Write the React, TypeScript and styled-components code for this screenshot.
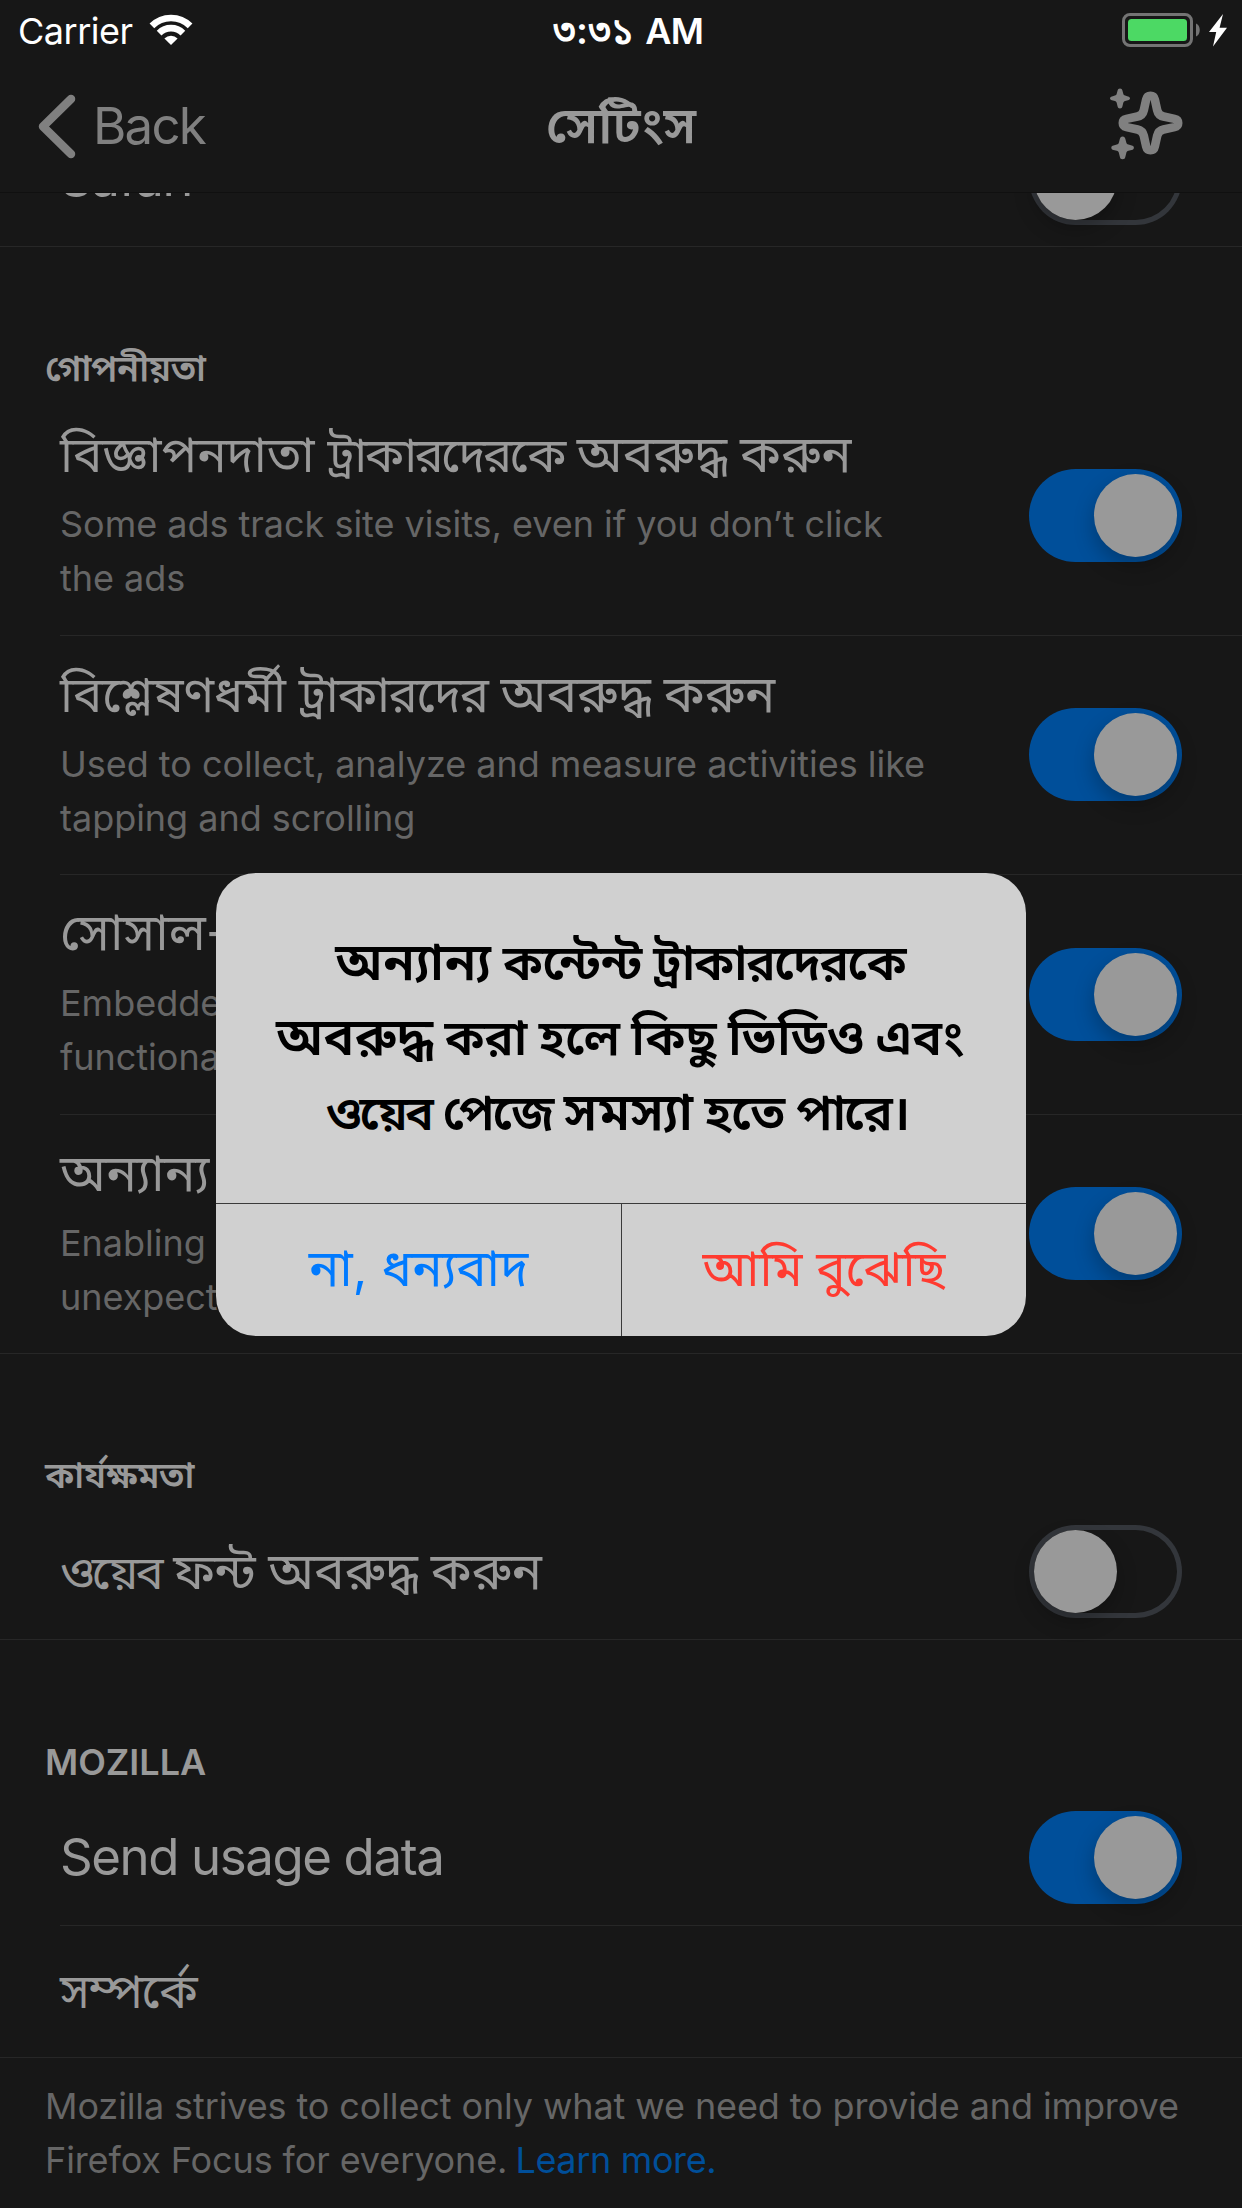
import React from "react";
import styled, { createGlobalStyle } from "styled-components";

const GlobalStyle = createGlobalStyle`
  *, *::before, *::after { box-sizing: border-box; }
  html, body { margin: 0; padding: 0; background: #171717; }
  body {
    font-family: Inter, "Noto Sans Bengali", "Noto Sans", sans-serif;
    color: #999999;
  }
`;

const Screen = styled.div`
  position: relative;
  display: flex;
  flex-direction: column;
  width: 1242px;
  height: 2208px;
  overflow: hidden;
  background: #171717;
`;

const StatusBar = styled.header`
  display: grid;
  grid-template-columns: 1fr auto 1fr;
  flex: none;
  height: 60px;
  line-height: 62px;
  font-size: 36px;
  color: #ffffff;
`;

const StatusLeft = styled.div`
  display: flex;
  gap: 16px;
  padding-left: 18px;
  letter-spacing: -0.5px;
`;

const WifiIcon = styled.svg`
  flex: none;
  width: 44px;
  height: 32px;
  margin-top: 14px;
`;

const Clock = styled.div`
  display: flex;
  gap: 11px;
  margin-left: 14px;
  font-weight: 600;
  letter-spacing: -0.8px;
`;

const Digits = styled.span`
  font-size: 37.5px;
  letter-spacing: 0.4px;
`;

const StatusRight = styled.div`
  display: flex;
  justify-content: flex-end;
  padding: 12px 14px 0 0;
`;

const BatteryIcon = styled.svg`
  width: 106px;
  height: 36px;
`;

const NavBar = styled.nav`
  display: grid;
  grid-template-columns: 1fr auto 1fr;
  flex: none;
  height: 133px;
  padding: 0 36px;
  line-height: 131px;
  font-size: 51px;
  border-bottom: 1px solid #101010;
`;

const BackButton = styled.a`
  display: flex;
  gap: 17px;
  color: #808080;
  letter-spacing: -1.8px;
`;

const Chevron = styled.svg`
  width: 40px;
  height: 66px;
  margin-top: 34px;
`;

const NavTitle = styled.h1`
  margin: 0;
  font-size: 51.3px;
  font-weight: 600;
  line-height: 129px;
`;

const SparkleIcon = styled.svg`
  justify-self: end;
  width: 73px;
  height: 73px;
  margin: 28px 23px 0 0;
`;

const Content = styled.main`
  display: flex;
  flex-direction: column;
  flex: 1;
  min-height: 0;
  overflow: hidden;
`;

const ScrolledList = styled.div`
  flex: none;
  margin-top: -83px;
`;

const SectionHeader = styled.h2<{ $latin?: boolean }>`
  height: 149px;
  margin: 0;
  padding: ${(p) => (p.$latin ? 101 : 100)}px 0 0 45px;
  line-height: 43px;
  font-size: 36px;
  font-weight: 600;
  letter-spacing: ${(p) => (p.$latin ? 0 : -0.35)}px;
`;

const Cell = styled.div<{ $height: number; $last?: boolean; $top?: boolean }>`
  display: flex;
  justify-content: space-between;
  align-items: ${(p) => (p.$top ? "flex-start" : "center")};
  height: ${(p) => p.$height}px;
  margin-left: ${(p) => (p.$last ? 0 : 60)}px;
  padding-left: ${(p) => (p.$last ? 60 : 0)}px;
  padding-right: 60px;
  box-shadow: inset 0 -1px 0 #272727;
`;

const CellText = styled.div`
  display: flex;
  flex-direction: column;
  gap: 9.5px;
  padding-top: 26px;
`;

const CellTitle = styled.div<{ $latin?: boolean }>`
  height: 62px;
  margin-bottom: ${(p) => (p.$latin ? 1 : 3)}px;
  line-height: 62px;
  white-space: nowrap;
  font-size: ${(p) => (p.$latin ? 51 : 49)}px;
  letter-spacing: ${(p) => (p.$latin ? -1.42 : 0)}px;
  word-spacing: ${(p) => (p.$latin ? 0 : -1)}px;
`;

const CellDetail = styled.p`
  margin: 0;
  white-space: pre-line;
  line-height: 54px;
  font-size: 36px;
  letter-spacing: -0.02px;
  color: #666666;
`;

const Track = styled.div<{ $on: boolean; $raised?: boolean }>`
  display: flex;
  flex: none;
  align-self: center;
  align-items: center;
  justify-content: ${(p) => (p.$on ? "flex-end" : "flex-start")};
  width: 153px;
  height: 93px;
  margin-bottom: ${(p) => (p.$raised ? 2 : 0)}px;
  padding: 5px;
  border-radius: 47px;
  background: ${(p) => (p.$on ? "#004f9a" : "transparent")};
  box-shadow: ${(p) => (p.$on ? "none" : "inset 0 0 0 5px #33363b")};
`;

const Thumb = styled.div`
  width: 83px;
  height: 83px;
  border-radius: 50%;
  background: #999999;
  box-shadow: 0 9px 20px rgba(0, 0, 0, 0.25);
`;

const Footer = styled.p`
  margin: 0;
  padding: 21px 45px 0;
  white-space: nowrap;
  line-height: 54px;
  font-size: 36px;
  letter-spacing: -0.11px;
  color: #666666;
`;

const FooterLink = styled.a`
  margin-left: -2px;
  letter-spacing: -0.35px;
  color: #004f9a;
`;

const Overlay = styled.div`
  position: absolute;
  inset: 0;
  display: flex;
  align-items: center;
  justify-content: center;
`;

const Dialog = styled.section`
  display: flex;
  flex-direction: column;
  width: 810px;
  height: 463px;
  overflow: hidden;
  border-radius: 40px;
  background: #d0d0d0;
`;

const DialogMessage = styled.h3`
  display: flex;
  flex-direction: column;
  align-items: center;
  flex: 1;
  margin: 0;
  padding: 51px 2px 0 0;
  line-height: 75px;
  font-size: 49.7px;
  font-weight: 600;
  color: #000000;
`;

const MessageLine = styled.span`
  height: 75px;
  white-space: nowrap;
  word-spacing: -1.3px;

  &:last-child {
    padding-right: 6px;
  }
`;

const Word = styled.span<{ $size: number; $spacing: number }>`
  font-size: ${(p) => p.$size}px;
  letter-spacing: ${(p) => p.$spacing}px;
`;

const DialogActions = styled.div`
  display: grid;
  grid-template-columns: 405px 1fr;
  height: 133px;
  border-top: 1px solid #3a3a3a;
`;

const DialogButton = styled.button<{ $danger?: boolean }>`
  margin: 0;
  padding: 0 0 3px;
  border: 0;
  border-left: ${(p) => (p.$danger ? "1px solid #3a3a3a" : "0")};
  background: transparent;
  line-height: 128px;
  font-family: inherit;
  font-size: ${(p) => (p.$danger ? 49.1 : 50.8)}px;
  color: ${(p) => (p.$danger ? "#ff3b30" : "#007aff")};
`;

type WordSpec = [text: string, size: number, spacing: number];

function Phrase({ words }: { words: WordSpec[] }) {
  return (
    <>
      {words.map(([text, size, spacing], i) => (
        <React.Fragment key={i}>
          {i > 0 && " "}
          <Word $size={size} $spacing={spacing}>
            {text}
          </Word>
        </React.Fragment>
      ))}
    </>
  );
}

function Toggle({ on, raised }: { on: boolean; raised?: boolean }) {
  return (
    <Track $on={on} $raised={raised} role="switch" aria-checked={on}>
      <Thumb />
    </Track>
  );
}

const trackers: { title: WordSpec[]; detail: string }[] = [
  {
    title: [
      ["বিজ্ঞাপনদাতা", 49.2, 0],
      ["ট্রাকারদেরকে", 48.8, -2.6],
      ["অবরুদ্ধ", 51.5, 0],
      ["করুন", 50.6, 0],
    ],
    detail: "Some ads track site visits, even if you don’t click\nthe ads",
  },
  {
    title: [
      ["বিশ্লেষণধর্মী", 49, -0.1],
      ["ট্রাকারদের", 49, -1.4],
      ["অবরুদ্ধ", 51.5, 0],
      ["করুন", 50.6, 0],
    ],
    detail: "Used to collect, analyze and measure activities like\ntapping and scrolling",
  },
  { title: [["সোসাল-", 50.8, 0]], detail: "Embedded\nfunctionality" },
  { title: [["অন্যান্য", 51.5, 0]], detail: "Enabling\nunexpectedly" },
];

const webFonts: WordSpec[] = [
  ["ওয়েব", 47.2, -3],
  ["ফন্ট", 50, -0.4],
  ["অবরুদ্ধ", 51.5, -0.2],
  ["করুন", 50.6, 0],
];

const message: WordSpec[][] = [
  [
    ["অন্যান্য", 52.3, 0.3],
    ["কন্টেন্ট", 49.3, -0.3],
    ["ট্রাকারদেরকে", 49.7, -1.8],
  ],
  [
    ["অবরুদ্ধ", 52, 0],
    ["করা", 49.2, 0],
    ["হলে", 48.6, 0],
    ["কিছু", 49.7, 0],
    ["ভিডিও", 50, 0],
    ["এবং", 49.7, 0],
  ],
  [
    ["ওয়েব", 48, -2.6],
    ["পেজে", 48.6, -2],
    ["সমস্যা", 53, 0],
    ["হতে", 49.7, -0.3],
    ["পারে।", 49.7, -2.2],
  ],
];

export default function App() {
  return (
    <Screen>
      <GlobalStyle />
      <StatusBar>
        <StatusLeft>
          <span>Carrier</span>
          <WifiIcon viewBox="0 0 44 32">
            <g fill="none" stroke="#fff" strokeWidth="6.6">
              <path d="M2.9 11.9a27 27 0 0 1 38.2 0" />
              <path d="M10.1 19.1a16.8 16.8 0 0 1 23.8 0" />
            </g>
            <path d="M22 31l-6.6-6.6a9.4 9.4 0 0 1 13.2 0z" fill="#fff" />
          </WifiIcon>
        </StatusLeft>
        <Clock>
          <Digits>৩:৩১</Digits>
          <span>AM</span>
        </Clock>
        <StatusRight>
          <BatteryIcon viewBox="0 0 106 36">
            <rect x="1.5" y="2.5" width="68" height="31" rx="6.5" fill="none" stroke="#747474" strokeWidth="3" />
            <rect x="6" y="7" width="59" height="22" rx="3.5" fill="#4cd964" />
            <path d="M74 11.5c5 2 5 11 0 13z" fill="#747474" />
            <path d="M101 2L87 20h7.2L91 34.5L105 15.8h-7.4z" fill="#fff" />
          </BatteryIcon>
        </StatusRight>
      </StatusBar>

      <NavBar>
        <BackButton>
          <Chevron viewBox="0 0 40 66">
            <path d="M35 5L7 32.5L35 60" fill="none" stroke="#808080" strokeWidth="8.5" strokeLinecap="round" strokeLinejoin="round" />
          </Chevron>
          Back
        </BackButton>
        <NavTitle>সেটিংস</NavTitle>
        <SparkleIcon viewBox="0 0 73 73">
          <path
            d="M40.5 7.8c2.4 0 3.8 1.4 4.3 3.6l2.4 10.8c.8 3.6 2.8 5.5 6.3 6.3l11 2.4c2.3.5 3.7 1.9 3.7 4.1s-1.4 3.6-3.7 4.1l-11 2.4c-3.5.8-5.5 2.7-6.3 6.3l-2.4 10.8c-.5 2.2-1.9 3.6-4.3 3.6s-3.8-1.4-4.3-3.6l-2.4-10.8c-.8-3.6-2.8-5.5-6.3-6.3l-11-2.4c-2.3-.5-3.7-1.9-3.7-4.1s1.4-3.6 3.7-4.1l11-2.4c3.5-.8 5.5-2.7 6.3-6.3l2.4-10.8c.5-2.2 1.9-3.6 4.3-3.6z"
            fill="none"
            stroke="#808080"
            strokeWidth="8.6"
          />
          <g fill="#808080">
            <path d="M10 .6c1.4 0 2.1.9 2.4 2l.9 3.2c.3 1 .8 1.5 1.8 1.8l2.9.8c1.2.3 2 .8 2 1.9s-.8 1.6-2 1.9l-2.9.8c-1 .3-1.5.8-1.8 1.8l-.9 3.6c-.3 1.1-1 2-2.4 2s-2.1-.9-2.4-2l-.9-3.6c-.3-1-.8-1.5-1.8-1.8L2 12.2c-1.2-.3-2-.8-2-1.9s.8-1.6 2-1.9l2.9-.8c1-.3 1.5-.8 1.8-1.8l.9-3.2c.3-1.1 1-2 2.4-2z" />
            <path d="M12.6 48.5c1.7 0 2.4 1 2.7 2.3l1 3.7c.3 1.2 1 1.8 2.1 2.1l3.3.9c1.3.3 2.2.9 2.2 2.2s-.9 1.9-2.2 2.2l-3.3.9c-1.1.3-1.8.9-2.1 2.1l-1 4.1c-.3 1.3-1 2.3-2.7 2.3s-2.4-1-2.7-2.3l-1-4.1c-.3-1.2-1-1.8-2.1-2.1l-3.3-.9c-1.3-.3-2.2-.9-2.2-2.2s.9-1.9 2.2-2.2l3.3-.9c1.1-.3 1.8-.9 2.1-2.1l1-3.7c.3-1.3 1-2.3 2.7-2.3z" />
          </g>
        </SparkleIcon>
      </NavBar>

      <Content>
        <ScrolledList>
          <Cell $height={137} $last>
            <CellTitle $latin>Safari</CellTitle>
            <Toggle on={false} />
          </Cell>

          <SectionHeader>গোপনীয়তা</SectionHeader>
          {trackers.map((row, i) => (
            <Cell key={row.detail} $height={i % 2 === 0 ? 240 : 239} $last={i === trackers.length - 1} $top>
              <CellText>
                <CellTitle>
                  <Phrase words={row.title} />
                </CellTitle>
                <CellDetail>{row.detail}</CellDetail>
              </CellText>
              <Toggle on raised />
            </Cell>
          ))}

          <SectionHeader>কার্যক্ষমতা</SectionHeader>
          <Cell $height={137} $last>
            <CellTitle>
              <Phrase words={webFonts} />
            </CellTitle>
            <Toggle on={false} />
          </Cell>

          <SectionHeader $latin>MOZILLA</SectionHeader>
          <Cell $height={137}>
            <CellTitle $latin>Send usage data</CellTitle>
            <Toggle on />
          </Cell>
          <Cell $height={132} $last>
            <CellTitle>
              <Phrase words={[["সম্পর্কে", 48, -1.2]]} />
            </CellTitle>
          </Cell>
          <Footer>
            Mozilla strives to collect only what we need to provide and improve
            <br />
            Firefox Focus for everyone. <FooterLink>Learn more.</FooterLink>
          </Footer>
        </ScrolledList>
      </Content>

      <Overlay>
        <Dialog role="alertdialog">
          <DialogMessage>
            {message.map((line, i) => (
              <MessageLine key={i}>
                <Phrase words={line} />
              </MessageLine>
            ))}
          </DialogMessage>
          <DialogActions>
            <DialogButton>না, ধন্যবাদ</DialogButton>
            <DialogButton $danger>আমি বুঝেছি</DialogButton>
          </DialogActions>
        </Dialog>
      </Overlay>
    </Screen>
  );
}
